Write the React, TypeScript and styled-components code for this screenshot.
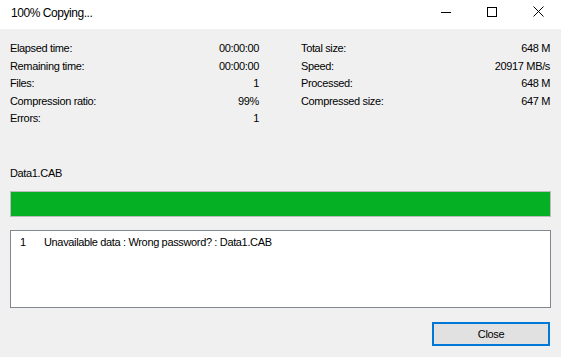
import React from "react";
import styled, { createGlobalStyle } from "styled-components";

const Global = createGlobalStyle`
  html, body { margin: 0; padding: 0; background: #f0f0f0; }
  body { width: 561px; height: 357px; overflow: hidden; font-family: "Liberation Sans", Arial, sans-serif; }
`;

const Window = styled.div`
  width: 561px;
  height: 357px;
  display: flex;
  flex-direction: column;
  background: #f0f0f0;
  color: #000;
`;

const TitleBar = styled.div`
  height: 29px;
  background: #fff;
  display: flex;
  align-items: center;
  justify-content: space-between;
`;

const Title = styled.div`
  padding-left: 11px;
  font-size: 12px;
  letter-spacing: -0.45px;
  color: #000;
  margin-top: -3px;
`;

const Controls = styled.div`
  display: flex;
  height: 29px;
`;

const CtlButton = styled.div`
  width: 46px;
  height: 29px;
  display: flex;
  align-items: center;
  justify-content: center;
  margin-top: -3px;
`;

const Body = styled.div`
  display: flex;
  flex-direction: column;
  padding: 0 10px;
  font-size: 11px;
  letter-spacing: -0.35px;
`;

const Stats = styled.div`
  margin-top: 11px;
  display: grid;
  grid-template-columns: 249px 249px;
  column-gap: 42px;
`;

const Column = styled.div`
  display: flex;
  flex-direction: column;
`;

const Row = styled.div`
  display: flex;
  justify-content: space-between;
  height: 17.5px;
  line-height: 17.5px;
  white-space: nowrap;
`;

const FileName = styled.div`
  margin-top: 37px;
  height: 17.5px;
  line-height: 17.5px;
`;

const Progress = styled.div`
  margin-top: 9px;
  height: 26px;
  box-sizing: border-box;
  border: 1px solid #bcbcbc;
  background: #e6e6e6;
`;

const Fill = styled.div`
  height: 100%;
  background: #06b025;
`;

const LogBox = styled.div`
  margin-top: 13px;
  height: 78px;
  box-sizing: border-box;
  border: 1px solid #828790;
  background: #fff;
  padding: 3px 0 0 9px;
`;

const LogLine = styled.div`
  display: flex;
  line-height: 17px;
`;

const LogIndex = styled.span`
  width: 24px;
`;

const Footer = styled.div`
  display: flex;
  justify-content: flex-end;
  margin-top: 14px;
  padding-right: 1px;
`;

const CloseButton = styled.button`
  width: 118px;
  height: 24px;
  box-sizing: border-box;
  border: 2px solid #0078d7;
  background: #e1e1e1;
  font-family: "Liberation Sans", Arial, sans-serif;
  font-size: 11px;
  letter-spacing: -0.35px;
  color: #000;
  padding: 0;
`;

const left: [string, string][] = [
  ["Elapsed time:", "00:00:00"],
  ["Remaining time:", "00:00:00"],
  ["Files:", "1"],
  ["Compression ratio:", "99%"],
  ["Errors:", "1"],
];

const right: [string, string][] = [
  ["Total size:", "648 M"],
  ["Speed:", "20917 MB/s"],
  ["Processed:", "648 M"],
  ["Compressed size:", "647 M"],
];

export default function App() {
  return (
    <>
      <Global />
      <Window>
        <TitleBar>
          <Title>100% Copying...</Title>
          <Controls>
            <CtlButton>
              <svg width="10" height="10" viewBox="0 0 10 10">
                <line x1="0" y1="5.5" x2="10" y2="5.5" stroke="#000" strokeWidth="1" />
              </svg>
            </CtlButton>
            <CtlButton>
              <svg width="10" height="10" viewBox="0 0 10 10">
                <rect x="0.5" y="0.5" width="9" height="9" fill="none" stroke="#000" strokeWidth="1" />
              </svg>
            </CtlButton>
            <CtlButton>
              <svg width="11" height="11" viewBox="0 0 11 11">
                <path d="M0.5 0.5 L10.5 10.5 M10.5 0.5 L0.5 10.5" stroke="#000" strokeWidth="1" />
              </svg>
            </CtlButton>
          </Controls>
        </TitleBar>
        <Body>
          <Stats>
            <Column>
              {left.map(([k, v]) => (
                <Row key={k}>
                  <span>{k}</span>
                  <span>{v}</span>
                </Row>
              ))}
            </Column>
            <Column>
              {right.map(([k, v]) => (
                <Row key={k}>
                  <span>{k}</span>
                  <span>{v}</span>
                </Row>
              ))}
            </Column>
          </Stats>
          <FileName>Data1.CAB</FileName>
          <Progress>
            <Fill style={{ width: "100%" }} />
          </Progress>
          <LogBox>
            <LogLine>
              <LogIndex>1</LogIndex>
              <span>Unavailable data : Wrong password? : Data1.CAB</span>
            </LogLine>
          </LogBox>
          <Footer>
            <CloseButton>Close</CloseButton>
          </Footer>
        </Body>
      </Window>
    </>
  );
}
